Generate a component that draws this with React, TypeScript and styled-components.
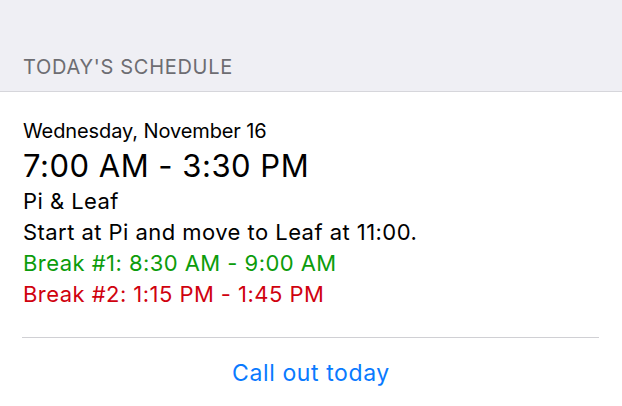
import * as React from 'react';
import styled, { createGlobalStyle } from 'styled-components';

const GlobalStyle = createGlobalStyle`
  html, body {
    margin: 0;
    padding: 0;
    background: #ffffff;
  }
  body {
    font-family: Inter, "Noto Sans", "Liberation Sans", sans-serif;
    -webkit-font-smoothing: antialiased;
  }
`;

const breaks = [
  { label: 'Break #1', start: '8:30 AM', end: '9:00 AM', color: '#0c9c0c' },
  { label: 'Break #2', start: '1:15 PM', end: '1:45 PM', color: '#d0020f' }
];

const App = () => {
  return (
    <>
      <GlobalStyle />
      <Page>
        <SectionHeader>
          <HeaderTitle>TODAY&apos;S SCHEDULE</HeaderTitle>
        </SectionHeader>
        <Card>
          <Details>
            <DateLine>Wednesday, November 16</DateLine>
            <TimeRange>7:00 AM - 3:30 PM</TimeRange>
            <Line>Pi &amp; Leaf</Line>
            <Line>Start at Pi and move to Leaf at 11:00.</Line>
            {breaks.map((b) => (
              <Line key={b.label} color={b.color}>
                {b.label}: {b.start} - {b.end}
              </Line>
            ))}
          </Details>
          <Separator />
          <ActionButton type='button'>Call out today</ActionButton>
        </Card>
      </Page>
    </>
  );
};

export default App;

const Page = styled.div`
  width: 622px;
  height: 406px;
  display: flex;
  flex-direction: column;
  overflow: hidden;
  background: #ffffff;
`;

const SectionHeader = styled.div`
  height: 92px;
  box-sizing: border-box;
  display: flex;
  align-items: flex-end;
  padding: 0 0 12px 23px;
  background: #efeff4;
  border-bottom: 1px solid #d6d6db;
`;

const HeaderTitle = styled.h2`
  margin: 0;
  font-size: 20px;
  line-height: 24px;
  font-weight: 400;
  color: #6d6d72;
  letter-spacing: 0.7px;
`;

const Card = styled.div`
  display: flex;
  flex-direction: column;
`;

const Details = styled.div`
  display: flex;
  flex-direction: column;
  padding: 25px 23px 0 23px;
  color: #000000;
`;

const DateLine = styled.div`
  font-size: 20px;
  line-height: 28px;
  letter-spacing: -0.1px;
`;

const TimeRange = styled.div`
  font-size: 31px;
  line-height: 41px;
  letter-spacing: 0.5px;
`;

const Line = styled.div<{ color?: string }>`
  font-size: 22px;
  line-height: 31px;
  letter-spacing: 0.45px;
  color: ${(p) => p.color || '#000000'};
`;

const Separator = styled.hr`
  margin: 27px 23px 0 22px;
  border: none;
  height: 1px;
  background: #d0d0d4;
`;

const ActionButton = styled.button`
  align-self: center;
  margin-top: 20px;
  padding: 0;
  border: none;
  background: none;
  font-family: inherit;
  font-size: 23px;
  line-height: 30px;
  letter-spacing: 0.6px;
  color: #0a7aff;
  cursor: pointer;
`;
